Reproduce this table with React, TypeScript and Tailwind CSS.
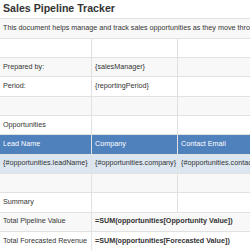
import React from 'react';

type Cell = { text?: string; span?: number; bold?: boolean };
type Row = { cells: Cell[]; kind?: 'title' | 'head' | 'data' };

const rows: Row[] = [
  { kind: 'title', cells: [{ text: 'Sales Pipeline Tracker', span: 3 }] },
  { cells: [{ text: 'This document helps manage and track sales opportunities as they move through the pipeline.', span: 3 }] },
  { cells: [{}, {}, {}] },
  { cells: [{ text: 'Prepared by:' }, { text: '{salesManager}' }, {}] },
  { cells: [{ text: 'Period:' }, { text: '{reportingPeriod}' }, {}] },
  { cells: [{}, {}, {}] },
  { cells: [{ text: 'Opportunities' }, {}, {}] },
  { kind: 'head', cells: [{ text: 'Lead Name' }, { text: 'Company' }, { text: 'Contact Email' }] },
  {
    kind: 'data',
    cells: [
      { text: '{#opportunities.leadName}' },
      { text: '{#opportunities.company}' },
      { text: '{#opportunities.contactEmail}' },
    ],
  },
  { cells: [{}, {}, {}] },
  { cells: [{ text: 'Summary' }, {}, {}] },
  { cells: [{ text: 'Total Pipeline Value' }, { text: '=SUM(opportunities[Opportunity Value])', span: 2, bold: true }] },
  { cells: [{ text: 'Total Forecasted Revenue' }, { text: '=SUM(opportunities[Forecasted Value])', span: 2, bold: true }] },
];

const spanClass: Record<number, string> = { 1: 'col-span-1', 2: 'col-span-2', 3: 'col-span-3' };

export default function App() {
  return (
    <div className="w-[250px] h-[250px] overflow-hidden bg-white font-['Liberation_Sans',Arial,sans-serif]">
      <div className="grid grid-cols-[92px_86px_320px] auto-rows-[19.33px] w-[498px]">
        {rows.map((row, ri) => {
          const even = ri % 2 === 1;
          let bg = even ? 'bg-[#f8f8f8]' : 'bg-white';
          let color = 'text-[#333333]';
          if (row.kind === 'head') {
            bg = 'bg-[#4f81bd]';
            color = 'text-white';
          }
          if (row.kind === 'data') bg = 'bg-[#dce6f1]';
          return row.cells.map((c, ci) => (
            <div
              key={`${ri}-${ci}`}
              className={`${spanClass[c.span ?? 1]} ${bg} ${color} flex items-center px-[3px] border-b border-r border-[#e1e1e1] whitespace-nowrap overflow-hidden ${
                row.kind === 'title'
                  ? 'text-[10.6px] font-bold text-[#1a1a1a]'
                  : 'text-[7.2px]'
              } ${c.bold ? 'font-bold text-[#222222]' : ''}`}
            >
              {c.text}
            </div>
          ));
        })}
      </div>
    </div>
  );
}
